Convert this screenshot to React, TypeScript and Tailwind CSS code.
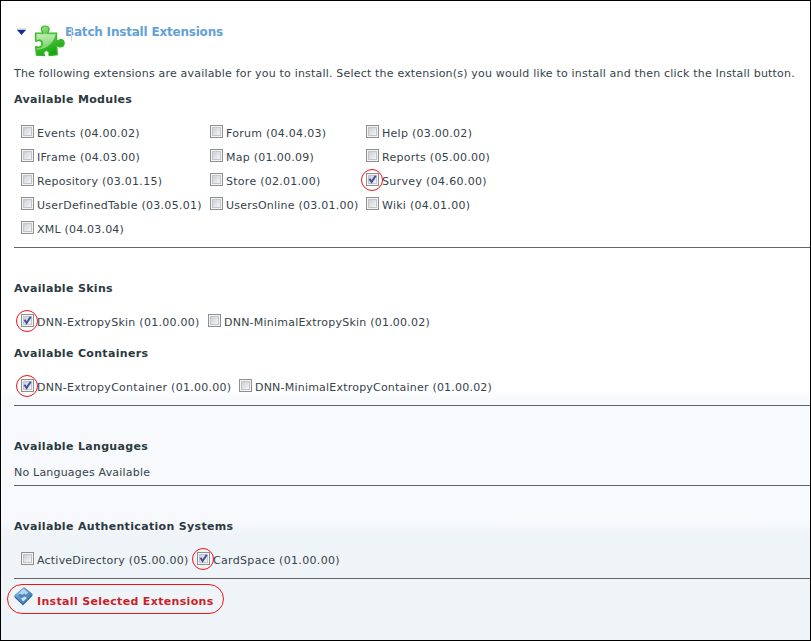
import type { ReactNode } from "react";

function Ring() {
  return <span className="absolute -top-[5px] -left-[6px] h-[22px] w-[22px] rounded-full border-[1.3px] border-[#f01418]" />;
}

function Option({ label, checked = false, track = "tracking-[0.27px]" }: { label: string; checked?: boolean; track?: string }) {
  return (
    <label className="flex h-6 items-center whitespace-nowrap">
      <span className="relative mr-[3px] mb-0.5 block h-[13px] w-[13px] shrink-0 border border-[#8e8f8f] bg-[#f4f4f4] p-px">
        <span className="block h-[9px] w-[9px] border border-[#c2c6cc] bg-linear-to-br from-[#cbcfd5] to-[#f6f6f6]" />
        {checked && (
          <svg className="absolute top-px left-px" width="9" height="9" viewBox="0 0 9 9">
            <path d="M1.5 3.8 L3.6 7 L7.7 0.8" fill="none" stroke="#40509c" strokeWidth="2" />
          </svg>
        )}
        {checked && <Ring />}
      </span>
      <span className={`pt-1 ${track}`}>{label}</span>
    </label>
  );
}

function Heading({ children }: { children: ReactNode }) {
  return <h2 className="h-5 pt-px text-[11px] leading-5 font-bold tracking-[0.33px] text-[#2b3940]">{children}</h2>;
}

function Rule() {
  return <div className="h-px bg-[#666]" />;
}

function PuzzleIcon() {
  return (
    <svg className="ml-2 shrink-0" width="31" height="32" viewBox="0 0 31 32">
      <defs>
        <linearGradient id="leaf" x1="0" y1="0" x2="0.4" y2="1">
          <stop offset="0" stopColor="#a4e291" />
          <stop offset="0.5" stopColor="#50c63d" />
          <stop offset="1" stopColor="#16a611" />
        </linearGradient>
        <linearGradient id="shine" x1="0" y1="0" x2="0" y2="1">
          <stop offset="0" stopColor="#eefbe9" stopOpacity="0.65" />
          <stop offset="1" stopColor="#b9edaa" stopOpacity="0.5" />
        </linearGradient>
      </defs>
      <path
        d="M1.5 8.2H8.6C9.8 7.8 7.2 6.2 7.3 4.2C7.4 2 9 1 11.2 1C13.5 1 15.2 2.3 15.1 4.4C15 6.5 12.9 7.5 14.2 8.2H22.6V15.4C22.9 17.2 24.6 14.5 27 14.5C29.1 14.5 30.3 16.1 30.2 18.3C30.1 20.5 28.7 22 26.7 22C24.5 22 23.6 20 22.8 21.1L23.3 29.7L15.7 30.7C13.9 30.2 15.4 29 15 27.6C14.6 26 13 25.4 11.6 25.8C10 26.2 9.4 27.8 10.1 29.2L10.6 30.5L2.4 30.2L1.5 22.2C1.9 20.7 3.4 22.4 5.2 22C7 21.6 8 20.4 7.9 18.5C7.8 16.7 6.6 15.4 4.9 15.3C3.2 15.2 2.1 17.2 1.5 15.8Z"
        fill="url(#leaf)"
        stroke="#39b52b"
        strokeWidth="1.2"
      />
      <path d="M2.6 9.2H21.5C20.5 15 16 23.5 2.7 25L2.4 23C6.5 23.8 9.2 21.5 9 18.2C8.8 15 6 13.2 2.6 15.2Z" fill="url(#shine)" />
    </svg>
  );
}

function InstallIcon() {
  return (
    <svg width="19" height="19" viewBox="0 0 19 19" className="-mt-[5px] mr-[3px] -ml-px shrink-0">
      <defs>
        <linearGradient id="disk" x1="0" y1="0" x2="1" y2="1">
          <stop offset="0" stopColor="#9fc6e8" />
          <stop offset="0.5" stopColor="#5c97cf" />
          <stop offset="1" stopColor="#2c64a4" />
        </linearGradient>
      </defs>
      <path d="M0.6 8.6V10.6L9 18.4L18.3 9V7Z" fill="#3567a0" />
      <path d="M10 0.6L18.3 7L9 16.4L0.6 8.6Z" fill="url(#disk)" stroke="#5585b8" strokeWidth="0.8" />
      <path d="M9.4 1.8L14.2 5.4L10 9.4L3.6 7.2Z" fill="#b4d3ee" />
      <path d="M3.6 8.4L6.3 6.6L8 8L10.4 6.4L12.4 8.6L8.8 12.4Z" fill="#4d86c1" />
      <path d="M7 11.6L10.8 9.6L13 11L9.2 14.6Z" fill="#d3e4f4" />
    </svg>
  );
}

export default function App() {
  return (
    <main
      className="h-[641px] w-[811px] overflow-hidden border border-black bg-[linear-gradient(to_bottom,#fff_0,#fff_388px,#f7f9fd_399px,#f7f9fd_520px,#eff4f8_534px,#eff4f8_100%)] pl-[13px] text-[11px] text-[#35434b]"
      style={{ fontFamily: 'Verdana, "DejaVu Sans", sans-serif' }}
    >
      <header className="flex h-[62px] items-start pt-[24px]">
        <svg className="mt-[3px] ml-[3px] shrink-0" width="9" height="8" viewBox="0 0 9 8">
          <path d="M0 0.5H9V2H0Z" fill="#c8c8c8" />
          <path d="M0 2H9L4.5 7Z" fill="#0b32a0" />
        </svg>
        <PuzzleIcon />
        <h1 className="relative -mt-0.5 text-[12px] leading-[18px] font-bold tracking-[-0.2px] text-[#64a1d5]">
          Batch Install Extensions
          <span className="absolute top-[5px] left-1.5 h-[13px] w-px bg-[#ead0b4]" />
        </h1>
      </header>
      <p className="h-5 pt-px leading-5 tracking-[0.192px] whitespace-nowrap">
        The following extensions are available for you to install. Select the extension(s) you would like to install and then click the Install button.
      </p>
      <section className="pt-1.5">
        <Heading>Available Modules</Heading>
        <div className="grid grid-cols-[189px_156px_auto] pt-[11px] pb-[7px] pl-[7px]">
          <Option label="Events (04.00.02)" />
          <Option label="Forum (04.04.03)" />
          <Option label="Help (03.00.02)" />
          <Option label="IFrame (04.03.00)" />
          <Option label="Map (01.00.09)" />
          <Option label="Reports (05.00.00)" />
          <Option label="Repository (03.01.15)" />
          <Option label="Store (02.01.00)" />
          <Option label="Survey (04.60.00)" checked track="tracking-[0.33px]" />
          <Option label="UserDefinedTable (03.05.01)" />
          <Option label="UsersOnline (03.01.00)" track="tracking-[0.23px]" />
          <Option label="Wiki (04.01.00)" />
          <Option label="XML (04.03.04)" track="tracking-[0.2px]" />
        </div>
        <Rule />
      </section>
      <section className="pt-[30px]">
        <Heading>Available Skins</Heading>
        <div className="grid grid-cols-[187px_auto] pt-[11px] pl-[7px]">
          <Option label="DNN-ExtropySkin (01.00.00)" checked />
          <Option label="DNN-MinimalExtropySkin (01.00.02)" track="tracking-[0.22px]" />
        </div>
      </section>
      <section className="pt-[10px]">
        <Heading>Available Containers</Heading>
        <div className="grid grid-cols-[218px_auto] pt-[11px] pb-[7px] pl-[7px]">
          <Option label="DNN-ExtropyContainer (01.00.00)" checked />
          <Option label="DNN-MinimalExtropyContainer (01.00.02)" track="tracking-[0.21px]" />
        </div>
        <Rule />
      </section>
      <section className="pt-[30px]">
        <Heading>Available Languages</Heading>
        <p className="mt-1.5 mb-[3px] h-5 pt-px leading-5 tracking-[0.2px]">No Languages Available</p>
        <Rule />
      </section>
      <section className="pt-[30px]">
        <Heading>Available Authentication Systems</Heading>
        <div className="grid grid-cols-[176px_auto] pt-[11px] pb-[7px] pl-[7px]">
          <Option label="ActiveDirectory (05.00.00)" track="tracking-[0.22px]" />
          <Option label="CardSpace (01.00.00)" checked track="tracking-[0.33px]" />
        </div>
        <Rule />
      </section>
      <button className="mt-[5px] -ml-[7px] flex h-[30px] w-[217px] items-center rounded-[15px] border-[1.3px] border-[#f01418] pl-[7px] text-[11px] font-bold whitespace-nowrap text-[#cb1f2b]">
        <InstallIcon />
        <span className="ml-px pt-1.5 tracking-[0.34px]">Install Selected Extensions</span>
      </button>
    </main>
  );
}
